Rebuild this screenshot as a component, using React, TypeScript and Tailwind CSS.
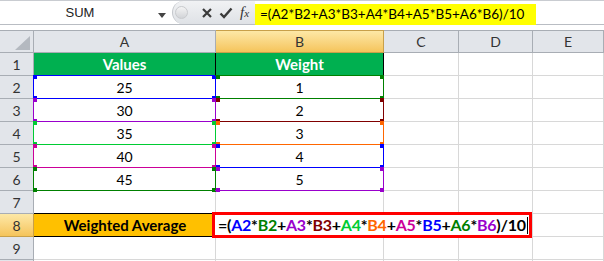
const font = "font-['Lato','Open_Sans',sans-serif]";

type Ref = { border: string; bg: string };

const refs: Record<string, Ref> = {
  A2: { border: 'border-[#0000ff]', bg: 'bg-[#0000ff]' },
  B2: { border: 'border-[#008000]', bg: 'bg-[#008000]' },
  A3: { border: 'border-[#9900cc]', bg: 'bg-[#9900cc]' },
  B3: { border: 'border-[#800000]', bg: 'bg-[#800000]' },
  A4: { border: 'border-[#00cc33]', bg: 'bg-[#00cc33]' },
  B4: { border: 'border-[#ff6600]', bg: 'bg-[#ff6600]' },
  A5: { border: 'border-[#cc0099]', bg: 'bg-[#cc0099]' },
  B5: { border: 'border-[#0000ff]', bg: 'bg-[#0000ff]' },
  A6: { border: 'border-[#008000]', bg: 'bg-[#008000]' },
  B6: { border: 'border-[#9900cc]', bg: 'bg-[#9900cc]' },
};

const data = [
  [2, '25', '1'],
  [3, '30', '2'],
  [4, '35', '3'],
  [5, '40', '4'],
  [6, '45', '5'],
] as const;

const formula: [string, string][] = [
  ['=(', 'text-black'],
  ['A2', 'text-[#0000ff]'],
  ['*', 'text-black'],
  ['B2', 'text-[#008000]'],
  ['+', 'text-black'],
  ['A3', 'text-[#9900cc]'],
  ['*', 'text-black'],
  ['B3', 'text-[#800000]'],
  ['+', 'text-black'],
  ['A4', 'text-[#00cc33]'],
  ['*', 'text-black'],
  ['B4', 'text-[#ff6600]'],
  ['+', 'text-black'],
  ['A5', 'text-[#cc0099]'],
  ['*', 'text-black'],
  ['B5', 'text-[#0000ff]'],
  ['+', 'text-black'],
  ['A6', 'text-[#008000]'],
  ['*', 'text-black'],
  ['B6', 'text-[#9900cc]'],
  [')/10', 'text-black'],
];

// range highlight drawn over a referenced cell; lower rows skip the top edge so the
// upper range keeps the shared line, and B skips its left edge so A keeps it
const RangeBox = ({ r, first, colB }: { r: Ref; first: boolean; colB: boolean }) => {
  let edges = '';
  if (!colB) edges = first ? 'border -top-px' : 'border-x border-b top-0';
  else edges = first ? 'border-t border-r border-b -top-px' : 'border-r border-b top-0';
  const left = colB ? 'left-px' : '-left-px';
  return (
    <div className={`absolute -left-px -right-px -bottom-px pointer-events-none z-10 ${edges} ${r.border}`}>
      <div className={`absolute -top-px ${left} w-[4px] h-[4px] ${r.bg}`} />
      <div className={`absolute -top-px -right-px w-[4px] h-[4px] ${r.bg}`} />
      <div className={`absolute -bottom-[2px] ${left} w-[4px] h-[4px] ${r.bg}`} />
      <div className={`absolute -bottom-[2px] -right-px w-[4px] h-[4px] ${r.bg}`} />
    </div>
  );
};

const RowHead = ({ n, active }: { n: number; active?: boolean }) => (
  <div
    className={`flex items-center justify-center border-r border-b text-[14px] text-[#333] ${
      active
        ? 'bg-gradient-to-b from-[#fde8a6] to-[#f5c45a] border-[#c8a04a]'
        : 'bg-[#e2e5ea] border-[#a8adb4]'
    }`}
  >
    {n > 9 ? '' : n}
  </div>
);

const Blank = ({ extra = '' }: { extra?: string }) => (
  <div className={`border-r border-b border-[#d8d8d8] ${extra}`} />
);

const Blanks = () => (
  <>
    <Blank />
    <Blank />
    <Blank />
  </>
);

export default function App() {
  return (
    <div className={`w-[604px] h-[261px] overflow-hidden bg-white ${font}`}>
      {/* formula bar */}
      <div className="h-[30px] flex flex-col">
        <div className="h-px bg-[#c9ccd1]" />
        <div className="h-[24px] flex border-b border-[#b9bdc3]">
          <div className="w-[172px] shrink-0 flex items-center relative">
            <span className="w-[160px] text-center text-[13px] text-[#222] font-['Liberation_Sans',sans-serif]">SUM</span>
            <svg width="8" height="5" viewBox="0 0 8 5" className="absolute left-[158px] top-[12px]">
              <path d="M0 0h8L4 5z" fill="#444" />
            </svg>
          </div>
          <div className="w-[83px] shrink-0 flex items-center bg-gradient-to-b from-[#f1f2f4] to-[#dfe2e6] rounded-l-full border-l border-[#c3c6cb]">
            <div className="ml-[2px] w-[13px] h-[13px] rounded-full bg-gradient-to-b from-[#f4f4f4] to-[#d2d4d8] border border-[#c8cacd]" />
            <svg width="12" height="12" viewBox="0 0 12 12" className="ml-[13px]">
              <path d="M2 2l8 8M10 2l-8 8" stroke="#3a3a3a" strokeWidth="2.2" />
            </svg>
            <svg width="14" height="12" viewBox="0 0 14 12" className="ml-[6px]">
              <path d="M1.5 6.5l3.5 3.5L12.5 1.5" stroke="#3a3a3a" strokeWidth="2.4" fill="none" />
            </svg>
            <span className="ml-[7px] text-[15px] italic text-[#333] font-['Liberation_Serif',serif] leading-none">
              f<span className="text-[11px]">x</span>
            </span>
          </div>
          <div className="w-[281px] shrink-0 mt-[3px] -mb-px bg-[#ffff00] flex items-center pl-[5px] text-[13.5px] text-black whitespace-nowrap">
            =(A2*B2+A3*B3+A4*B4+A5*B5+A6*B6)/10
          </div>
          <div className="flex-1" />
        </div>
        <div className="flex-1" />
      </div>

      {/* grid */}
      <div className="grid grid-cols-[34px_182px_168px_75px_74px_1fr] auto-rows-[23px]">
        {/* header */}
        <div className="relative bg-[#e2e5ea] border-t border-r border-b border-[#a8adb4]">
          <svg width="15" height="14" viewBox="0 0 15 14" className="absolute right-[3px] bottom-[2px]">
            <path d="M15 0V14H0z" fill="#b4b9c0" />
          </svg>
        </div>
        {['A', 'B', 'C', 'D', 'E'].map((c) => (
          <div
            key={c}
            className={`flex items-center justify-center border-t border-r border-b text-[14px] text-[#333] ${
              c === 'B'
                ? 'bg-gradient-to-b from-[#fde8a6] to-[#f5c45a] border-[#c8a04a]'
                : 'bg-[#e2e5ea] border-[#a8adb4]'
            }`}
          >
            {c}
          </div>
        ))}

        {/* row 1 */}
        <RowHead n={1} />
        <div className="flex items-center justify-center bg-[#00b050] border-r border-black text-white font-bold text-[15px]">
          Values
        </div>
        <div className="flex items-center justify-center bg-[#00b050] border-r border-black text-white font-bold text-[15px]">
          Weight
        </div>
        <Blanks />

        {/* rows 2-6 */}
        {data.map(([n, a, b]) => (
          <div key={n} className="contents">
            <RowHead n={n} />
            <div className="relative flex items-center justify-center border-r border-b border-[#d8d8d8] text-[14px] text-black">
              {a}
              <RangeBox r={refs[`A${n}`]} first={n === 2} colB={false} />
            </div>
            <div className="relative flex items-center justify-center border-r border-b border-[#d8d8d8] text-[14px] text-black">
              {b}
              <RangeBox r={refs[`B${n}`]} first={n === 2} colB />
            </div>
            <Blanks />
          </div>
        ))}

        {/* row 7 */}
        <RowHead n={7} />
        <div className="border-r border-b border-r-[#d8d8d8] border-b-black" />
        <Blank />
        <Blanks />

        {/* row 8 */}
        <RowHead n={8} active />
        <div className="flex items-center justify-center bg-[#ffc000] border-b border-black text-black font-bold text-[15px]">
          Weighted Average
        </div>
        <div className="relative border-r border-b border-[#d8d8d8]">
          <div className="absolute z-30 -left-[4px] -top-[2px] w-[320px] h-[26px] border-[3px] border-[#ff0000] bg-white flex items-center pl-[3px] whitespace-nowrap font-bold text-[16px] tracking-[-0.25px] leading-none">
            {formula.map(([t, cls], i) => (
              <span key={i} className={cls}>
                {t}
              </span>
            ))}
            <span className="ml-[1px] w-px h-[17px] bg-black" />
          </div>
        </div>
        <Blanks />

        {/* row 9 */}
        <RowHead n={9} />
        <Blank />
        <Blank />
        <Blanks />

        {/* row 10, only its top edge shows */}
        <RowHead n={10} />
        <Blank />
        <Blank />
        <Blanks />
      </div>
    </div>
  );
}
